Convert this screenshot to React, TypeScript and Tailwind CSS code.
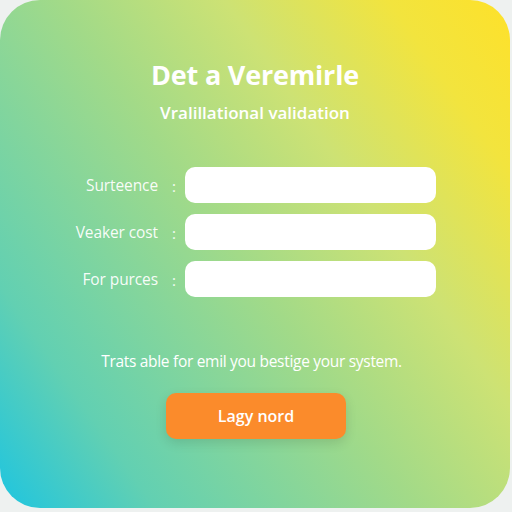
import React from "react";

const FIELDS = ["Surteence", "Veaker cost", "For purces"];

export default function App() {
  return (
    <div className="w-[512px] h-[512px] bg-[#eef1f0] overflow-hidden" style={{ fontFamily: '"Open Sans", "Noto Sans", sans-serif' }}>
      <div className="w-[510px] h-[508px] rounded-[40px] bg-[linear-gradient(55deg,#1ec5e0_0%,#62d0b2_18%,#a2da88_48%,#cde274_67%,#f2e43e_86%,#fee12a_100%)] flex flex-col items-center pt-[57px]">
        <h1 className="text-[27px] leading-[36px] font-bold text-white tracking-[-0.2px]">Det a Veremirle</h1>
        <p className="mt-[8px] text-[17px] leading-[24px] font-semibold text-white">Vralillational validation</p>

        <div className="mt-[42px] w-full flex flex-col gap-[11px] pl-[60px]">
          {FIELDS.map((f) => (
            <div key={f} className="flex items-center h-[36px]">
              <span className="w-[98px] pt-[2px] text-right text-[15.5px] text-white/95 tracking-[-0.1px]">{f}</span>
              <span className="w-[27px] pt-[2px] text-center text-[15px] text-white/90 pl-[5px]">:</span>
              <div className="w-[251px] h-[36px] rounded-[10px] bg-white" />
            </div>
          ))}
        </div>

        <p className="mt-[54px] mr-[7px] text-[15.5px] leading-[20px] text-white tracking-[-0.3px]">Trats able for emil you bestige your system.</p>

        <button className="mt-[22px] ml-[2px] w-[180px] h-[46px] rounded-[10px] bg-[#fb8b2b] text-white text-[16px] font-semibold shadow-[0_4px_12px_rgba(0,0,0,0.12)]">
          Lagy nord
        </button>
      </div>
    </div>
  );
}
